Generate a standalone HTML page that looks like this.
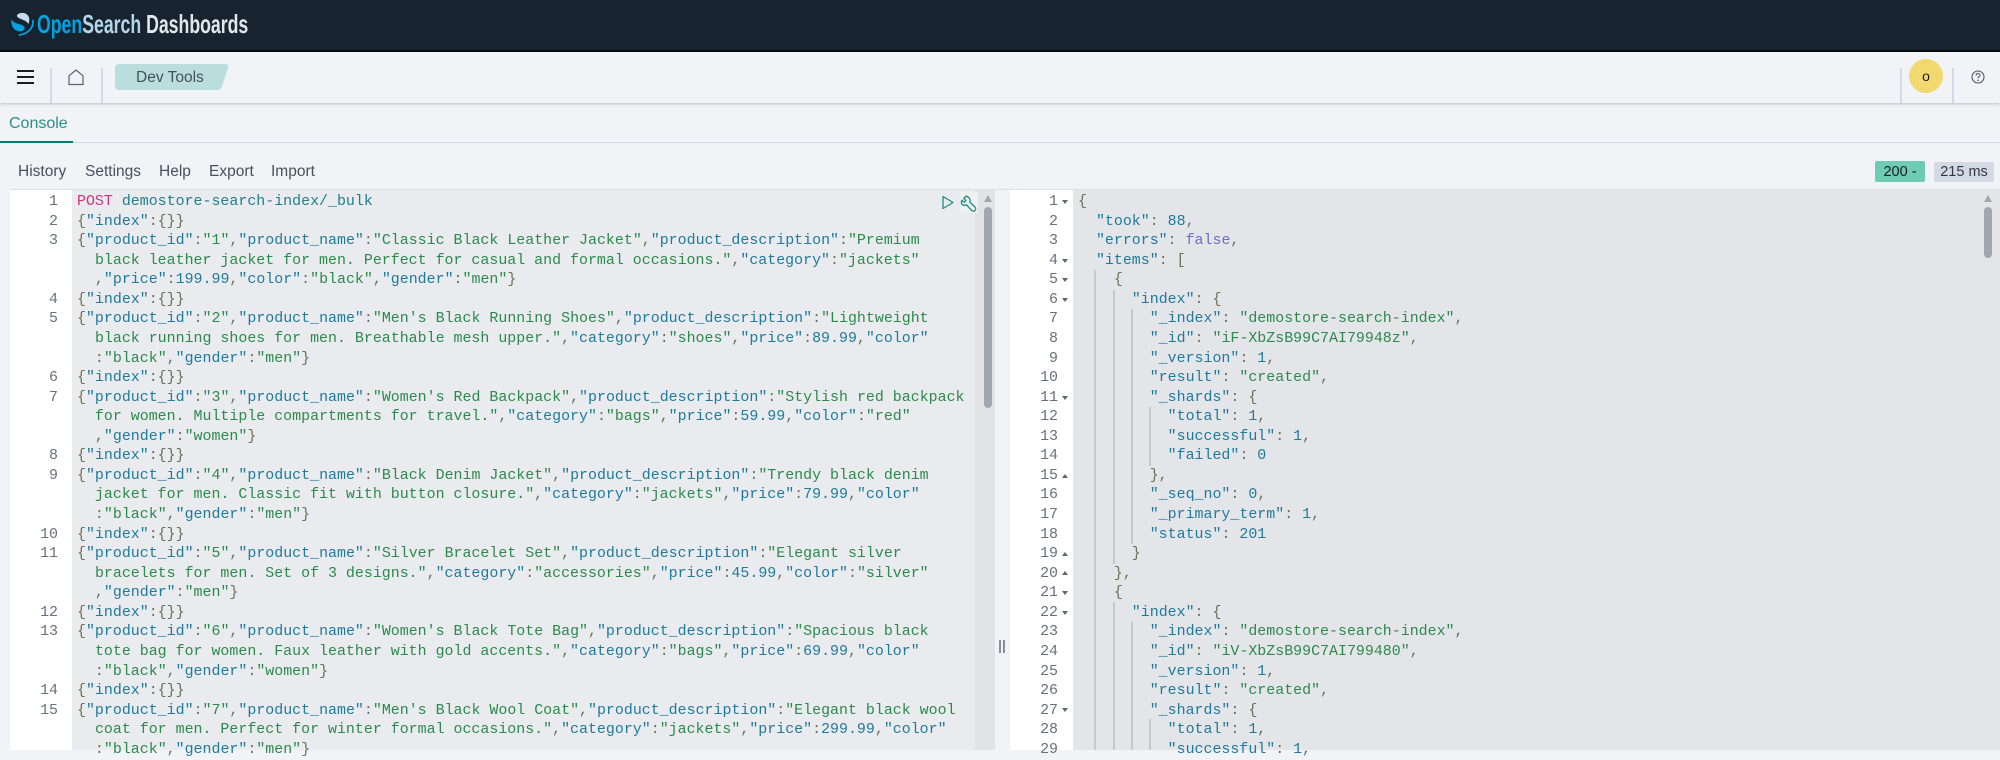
<!DOCTYPE html>
<html><head><meta charset="utf-8"><title>Dev Tools</title>
<style>
html,body{margin:0;padding:0;width:2000px;height:750px;overflow:hidden;background:#f1f3f6;font-family:"Liberation Sans",sans-serif;color:#343741}
.a{position:absolute}
pre{margin:0;font:14.94px/19.56px "Liberation Mono",monospace;color:#6f6f55;position:absolute;white-space:pre}
b,i{font-weight:normal;font-style:normal}
b{color:#1f7a9c}
i{color:#2c8a4d}
u{text-decoration:none;color:#6a6fc4}
em{font-style:normal;color:#1f7a9c}
.n{color:#69707d;text-align:right;width:50px}
.ui{font-size:15.5px;line-height:20px;white-space:nowrap;color:#465160}
.g{position:absolute;width:1.5px;background:#c6c8cc}
.f{position:absolute;left:1062px;width:0;height:0;border-left:3.5px solid transparent;border-right:3.5px solid transparent;border-top:4px solid #5f6670}
.f.up{border-top:0;border-bottom:4px solid #5f6670}
.d{position:absolute;width:1.5px;background:#d3dae6}
</style></head><body>
<div class="a" style="left:0;top:0;width:2000px;height:50px;background:#17232f"></div>
<div class="a" style="left:0;top:50px;width:2000px;height:2px;background:#05090d"></div>
<svg class="a" style="left:9px;top:10px" width="28" height="28" viewBox="0 0 28 28">
<path d="M8 5c2-2.500 7-3 10-.5 2.500 2 3 5.500 1.500 9.500-1.500-2.500-4-3.500-7-4.800C9.500 8 7.500 7 8 5z" fill="#c5dce8"/>
<path d="M2.500 9.500c-.8 5.500 1.500 10 6 11.500 3 1 6 0 7-2 .8-2-1-3.500-4-4.500C8 13.500 4.500 13 2.500 9.500z" fill="#00a3e0"/>
<path d="M24 10.500c.8 7-4.500 13-13.500 14.500" fill="none" stroke="#00a3e0" stroke-width="1.800" stroke-linecap="round"/>
</svg>
<div class="a" style="left:37px;top:8px;font-size:26px;line-height:32px;font-weight:bold;white-space:nowrap;transform:scaleX(.68);transform-origin:0 0;color:#dfe8ec"><span style="color:#00a3e0">Open</span><span style="color:#b4d6e6">Search</span> Dashboards</div>

<div class="a" style="left:0;top:52px;width:2000px;height:51px;background:#f1f3f6;box-shadow:0 1px 3px rgba(90,100,115,.35)"></div>
<div class="a" style="left:17px;top:70px;width:17px;height:2px;background:#1a1c21"></div>
<div class="a" style="left:17px;top:76px;width:17px;height:2px;background:#1a1c21"></div>
<div class="a" style="left:17px;top:82px;width:17px;height:2px;background:#1a1c21"></div>
<div class="d" style="left:50px;top:68px;height:35px"></div>
<div class="d" style="left:101px;top:68px;height:35px"></div>
<svg class="a" style="left:68px;top:69px" width="16" height="17" viewBox="0 0 16 17"><path d="M1 15.500V6.800L8 1l7 5.800v8.700z" fill="none" stroke="#5a6270" stroke-width="1.200" stroke-linejoin="round"/></svg>
<svg class="a" style="left:115px;top:64px" width="114" height="26" viewBox="0 0 114 26"><path d="M4 0H110c3 0 4 1.500 3 4l-6 18c-1 2.500-2.500 4-5 4H4c-2.500 0-4-1.500-4-4V4C0 1.500 1.500 0 4 0z" fill="#b9dedd"/></svg>
<div class="a ui" style="left:136px;top:68px">Dev Tools</div>
<div class="d" style="left:1900px;top:68px;height:35px"></div>
<div class="d" style="left:1952px;top:68px;height:35px"></div>
<div class="a" style="left:1909px;top:59px;width:34px;height:34px;border-radius:50%;background:#f1d86f"></div>
<div class="a" style="left:1909px;top:65px;width:34px;text-align:center;font-size:14px;line-height:22px;color:#1a1c21">o</div>
<svg class="a" style="left:1971px;top:70px" width="14" height="14" viewBox="0 0 14 14"><circle cx="7" cy="7" r="6" fill="none" stroke="#4f5663" stroke-width="1.100"/><path d="M5 5.500C5 4 6 3.500 7 3.500s2 .7 2 1.800c0 1.500-2 1.500-2 3" fill="none" stroke="#4f5663" stroke-width="1.100"/><circle cx="7" cy="10.300" r=".8" fill="#4f5663"/></svg>

<div class="a ui" style="left:9px;top:114px;color:#2a8f87;font-size:16px">Console</div>
<div class="a" style="left:0;top:142px;width:2000px;height:1px;background:#d3dae6"></div>
<div class="a" style="left:0;top:141px;width:73px;height:2px;background:#017d73"></div>

<div class="a ui" style="left:18px;top:162px">History</div>
<div class="a ui" style="left:85px;top:162px">Settings</div>
<div class="a ui" style="left:159px;top:162px">Help</div>
<div class="a ui" style="left:209px;top:162px">Export</div>
<div class="a ui" style="left:271px;top:162px">Import</div>

<div class="a" style="left:1875px;top:161px;width:50px;height:21px;background:#6dccb1;border-radius:2px;text-align:center;font-size:14.5px;line-height:22px;color:#1a1c21">200 -</div>
<div class="a" style="left:1934px;top:162px;width:60px;height:20px;background:#d3dae6;border-radius:2px;text-align:center;font-size:14.5px;line-height:21px;color:#343741">215 ms</div>

<div class="a" style="left:10px;top:190px;width:985px;height:560px;background:#e9ebee"></div>
<div class="a" style="left:10px;top:189px;width:1990px;height:1px;background:#dcdfe5"></div>
<div class="a" style="left:10px;top:190px;width:62px;height:560px;background:#fff"></div>
<div class="a" style="left:975px;top:190px;width:20px;height:560px;background:#e2e3e7"></div>
<div class="a" style="left:1010px;top:190px;width:990px;height:560px;background:#e4e5e9"></div>
<div class="a" style="left:1010px;top:190px;width:63px;height:560px;background:#fff"></div>
<div class="a" style="left:999px;top:640px;width:1.500px;height:13px;background:#8a909a"></div>
<div class="a" style="left:1003px;top:640px;width:1.500px;height:13px;background:#8a909a"></div>

<svg class="a" style="left:942px;top:195px" width="12" height="15" viewBox="0 0 12 15"><path d="M1 1.500v12L11 7.500z" fill="none" stroke="#1a8f82" stroke-width="1.300" stroke-linejoin="round"/></svg>
<div class="a" style="left:960px;top:192px;width:18px;height:21px;background:#eef0f2"></div>
<svg class="a" style="left:960px;top:195px" width="18" height="18" viewBox="0 0 18 18"><path d="M6 1.200 3.800 3.500l2.200 2-1.800 1.800L2 5.200C.8 7.200 1.300 9.200 3 10c1.200.6 2.500.4 3.500-.2l5 5.500c1 1.100 2.500 1.200 3.500.3 1-1 1-2.500 0-3.500L9.800 7C10.300 5.500 10 3.800 8.800 2.600 8 1.800 7 1.300 6 1.200z" fill="none" stroke="#1a8f82" stroke-width="1.300" stroke-linejoin="round"/></svg>
<svg class="a" style="left:980px;top:194px" width="16" height="10" viewBox="0 0 16 10"><path d="M8 1 12 8H4z" fill="#a0a7b0"/></svg>
<div class="a" style="left:984px;top:207px;width:8px;height:201px;border-radius:4px;background:#a0a7b0"></div>
<svg class="a" style="left:1980px;top:194px" width="16" height="10" viewBox="0 0 16 10"><path d="M8 1 12 8H4z" fill="#a0a7b0"/></svg>
<div class="a" style="left:1984px;top:207px;width:8px;height:51px;border-radius:4px;background:#a0a7b0"></div>

<pre class="n" style="left:8px;top:193px">1
2
3


4
5


6
7


8
9


10
11


12
13


14
15


</pre>
<pre style="left:77px;top:193px"><span style="color:#d6307f">POST</span> <span style="color:#1f7f8c">demostore-search-index/_bulk</span>
{<b>"index"</b>:{}}
{<b>"product_id"</b>:<i>"1"</i>,<b>"product_name"</b>:<i>"Classic Black Leather Jacket"</i>,<b>"product_description"</b>:<i>"Premium</i>
  <i>black leather jacket for men. Perfect for casual and formal occasions."</i>,<b>"category"</b>:<i>"jackets"</i>
  ,<b>"price"</b>:<em>199.99</em>,<b>"color"</b>:<i>"black"</i>,<b>"gender"</b>:<i>"men"</i>}
{<b>"index"</b>:{}}
{<b>"product_id"</b>:<i>"2"</i>,<b>"product_name"</b>:<i>"Men's Black Running Shoes"</i>,<b>"product_description"</b>:<i>"Lightweight</i>
  <i>black running shoes for men. Breathable mesh upper."</i>,<b>"category"</b>:<i>"shoes"</i>,<b>"price"</b>:<em>89.99</em>,<b>"color"</b>
  :<i>"black"</i>,<b>"gender"</b>:<i>"men"</i>}
{<b>"index"</b>:{}}
{<b>"product_id"</b>:<i>"3"</i>,<b>"product_name"</b>:<i>"Women's Red Backpack"</i>,<b>"product_description"</b>:<i>"Stylish red backpack</i>
  <i>for women. Multiple compartments for travel."</i>,<b>"category"</b>:<i>"bags"</i>,<b>"price"</b>:<em>59.99</em>,<b>"color"</b>:<i>"red"</i>
  ,<b>"gender"</b>:<i>"women"</i>}
{<b>"index"</b>:{}}
{<b>"product_id"</b>:<i>"4"</i>,<b>"product_name"</b>:<i>"Black Denim Jacket"</i>,<b>"product_description"</b>:<i>"Trendy black denim</i>
  <i>jacket for men. Classic fit with button closure."</i>,<b>"category"</b>:<i>"jackets"</i>,<b>"price"</b>:<em>79.99</em>,<b>"color"</b>
  :<i>"black"</i>,<b>"gender"</b>:<i>"men"</i>}
{<b>"index"</b>:{}}
{<b>"product_id"</b>:<i>"5"</i>,<b>"product_name"</b>:<i>"Silver Bracelet Set"</i>,<b>"product_description"</b>:<i>"Elegant silver</i>
  <i>bracelets for men. Set of 3 designs."</i>,<b>"category"</b>:<i>"accessories"</i>,<b>"price"</b>:<em>45.99</em>,<b>"color"</b>:<i>"silver"</i>
  ,<b>"gender"</b>:<i>"men"</i>}
{<b>"index"</b>:{}}
{<b>"product_id"</b>:<i>"6"</i>,<b>"product_name"</b>:<i>"Women's Black Tote Bag"</i>,<b>"product_description"</b>:<i>"Spacious black</i>
  <i>tote bag for women. Faux leather with gold accents."</i>,<b>"category"</b>:<i>"bags"</i>,<b>"price"</b>:<em>69.99</em>,<b>"color"</b>
  :<i>"black"</i>,<b>"gender"</b>:<i>"women"</i>}
{<b>"index"</b>:{}}
{<b>"product_id"</b>:<i>"7"</i>,<b>"product_name"</b>:<i>"Men's Black Wool Coat"</i>,<b>"product_description"</b>:<i>"Elegant black wool</i>
  <i>coat for men. Perfect for winter formal occasions."</i>,<b>"category"</b>:<i>"jackets"</i>,<b>"price"</b>:<em>299.99</em>,<b>"color"</b>
  :<i>"black"</i>,<b>"gender"</b>:<i>"men"</i>}</pre>

<pre class="n" style="left:1008px;top:193px">1
2
3
4
5
6
7
8
9
10
11
12
13
14
15
16
17
18
19
20
21
22
23
24
25
26
27
28
29</pre>
<div class="f" style="top:200px"></div>
<div class="f" style="top:259px"></div>
<div class="f" style="top:278px"></div>
<div class="f" style="top:298px"></div>
<div class="f" style="top:396px"></div>
<div class="f up" style="top:474px"></div>
<div class="f up" style="top:552px"></div>
<div class="f up" style="top:571px"></div>
<div class="f" style="top:591px"></div>
<div class="f" style="top:611px"></div>
<div class="f" style="top:708px"></div>

<div class="g" style="left:1094px;top:270px;height:480px"></div>
<div class="g" style="left:1113px;top:290px;height:274px"></div>
<div class="g" style="left:1113px;top:602px;height:148px"></div>
<div class="g" style="left:1131px;top:309px;height:235px"></div>
<div class="g" style="left:1131px;top:622px;height:128px"></div>
<div class="g" style="left:1149px;top:407px;height:59px"></div>
<div class="g" style="left:1149px;top:719px;height:31px"></div>

<pre style="left:1078px;top:193px">{
  <b>"took"</b>: <em>88</em>,
  <b>"errors"</b>: <u>false</u>,
  <b>"items"</b>: [
    {
      <b>"index"</b>: {
        <b>"_index"</b>: <i>"demostore-search-index"</i>,
        <b>"_id"</b>: <i>"iF-XbZsB99C7AI79948z"</i>,
        <b>"_version"</b>: <em>1</em>,
        <b>"result"</b>: <i>"created"</i>,
        <b>"_shards"</b>: {
          <b>"total"</b>: <em>1</em>,
          <b>"successful"</b>: <em>1</em>,
          <b>"failed"</b>: <em>0</em>
        },
        <b>"_seq_no"</b>: <em>0</em>,
        <b>"_primary_term"</b>: <em>1</em>,
        <b>"status"</b>: <em>201</em>
      }
    },
    {
      <b>"index"</b>: {
        <b>"_index"</b>: <i>"demostore-search-index"</i>,
        <b>"_id"</b>: <i>"iV-XbZsB99C7AI799480"</i>,
        <b>"_version"</b>: <em>1</em>,
        <b>"result"</b>: <i>"created"</i>,
        <b>"_shards"</b>: {
          <b>"total"</b>: <em>1</em>,
          <b>"successful"</b>: <em>1</em>,</pre>
</body></html>
